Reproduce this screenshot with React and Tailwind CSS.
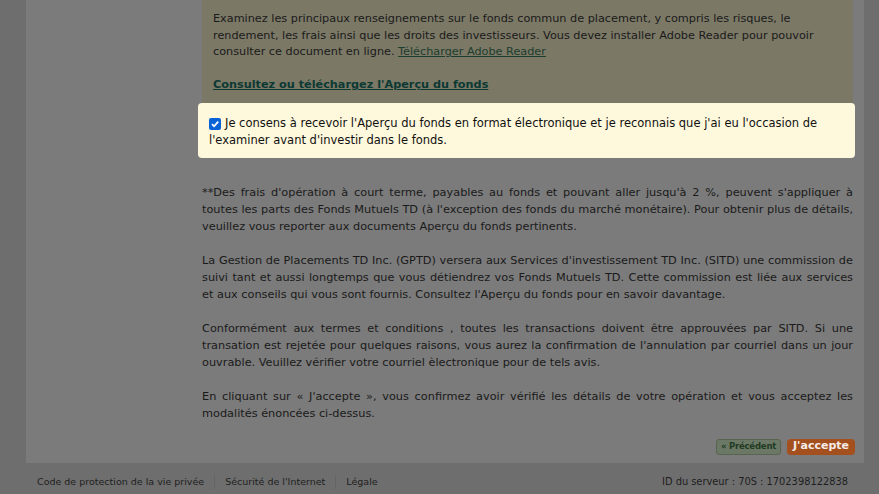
import React from "react";

const font = { fontFamily: '"DejaVu Sans", Verdana, sans-serif' };

function Check() {
  return (
    <span className="inline-flex w-[12px] h-[12px] bg-[#0a63d6] rounded-[2px] items-center justify-center shrink-0 mt-[3px]">
      <svg width="10" height="10" viewBox="0 0 10 10">
        <path d="M2 5.2 L4.1 7.3 L8.2 2.6" stroke="white" strokeWidth="1.8" fill="none" />
      </svg>
    </span>
  );
}

export default function App() {
  return (
    <div className="w-[879px] h-[494px] bg-[#6e6e6e] overflow-hidden flex flex-col text-[#1a1a1a]" style={font}>
      <div className="ml-[26px] w-[838px] h-[463px] bg-[#7b7b7b] flex shrink-0">
        <div className="w-[176px] shrink-0" />
        <div className="w-[651px] flex flex-col text-[11.5px]">
          <div className="bg-[#7b7866] pt-[11px] pb-[9px] px-[11px] leading-[16.5px] text-[11.25px]">
            <p>
              Examinez les principaux renseignements sur le fonds commun de placement, y compris les risques, le rendement, les frais ainsi que les droits des investisseurs. Vous devez installer Adobe Reader pour pouvoir consulter ce document en ligne.{" "}
              <span className="underline text-[#1c3d2e]">Télécharger Adobe Reader</span>
            </p>
            <p className="mt-[16.5px] font-bold underline text-[#0c3933]">Consultez ou téléchargez l'Aperçu du fonds</p>
          </div>
          <div className="ml-[-4px] mr-[-2px] bg-[#fef8dc] rounded-[4px] pt-[12.5px] pb-[8.5px] px-[11px] leading-[17px] text-[#111]">
            <div className="flex gap-[4px] items-start">
              <Check />
              <span>Je consens à recevoir l'Aperçu du fonds en format électronique et je reconnais que j'ai eu l'occasion de</span>
            </div>
            <div>l'examiner avant d'investir dans le fonds.</div>
          </div>
          <div className="mt-[26px] leading-[17px] text-justify text-[11.3px] flex flex-col gap-[17px]">
            <p>**Des frais d'opération à court terme, payables au fonds et pouvant aller jusqu'à 2 %, peuvent s'appliquer à toutes les parts des Fonds Mutuels TD (à l'exception des fonds du marché monétaire). Pour obtenir plus de détails, veuillez vous reporter aux documents Aperçu du fonds pertinents.</p>
            <p>La Gestion de Placements TD Inc. (GPTD) versera aux Services d'investissement TD Inc. (SITD) une commission de suivi tant et aussi longtemps que vous détiendrez vos Fonds Mutuels TD. Cette commission est liée aux services et aux conseils qui vous sont fournis. Consultez l'Aperçu du fonds pour en savoir davantage.</p>
            <p>Conformément aux termes et conditions , toutes les transactions doivent être approuvées par SITD. Si une transation est rejetée pour quelques raisons, vous aurez la confirmation de l'annulation par courriel dans un jour ouvrable. Veuillez vérifier votre courriel èlectronique pour de tels avis.</p>
            <p>En cliquant sur « J'accepte », vous confirmez avoir vérifié les détails de votre opération et vous acceptez les modalités énoncées ci-dessus.</p>
          </div>
          <div className="mt-[17px] flex justify-end gap-[6px] mr-[-2px]">
            <span className="h-[16px] w-[65px] flex items-center justify-center rounded-[3px] border border-[#58644f] bg-[#6c7866] text-[#203a22] text-[8.5px] font-bold whitespace-nowrap tracking-[-0.2px]">« Précédent</span>
            <span className="h-[16px] w-[68px] flex items-center justify-center rounded-[4px] bg-[#a4501e] text-[#f5ece6] text-[11px] font-bold whitespace-nowrap">J'accepte</span>
          </div>
        </div>
      </div>
      <div className="flex items-center h-[31px] pt-[7px] text-[9.5px] text-[#1e1e1e] pl-[37px] pr-[31px]">
        <span>Code de protection de la vie privée</span>
        <span className="mx-[10px] w-px h-[14px] bg-[#656565]" />
        <span>Sécurité de l'Internet</span>
        <span className="mx-[10px] w-px h-[14px] bg-[#656565]" />
        <span>Légale</span>
        <span className="ml-auto text-[9.85px]">ID du serveur : 70S : 1702398122838</span>
      </div>
    </div>
  );
}
